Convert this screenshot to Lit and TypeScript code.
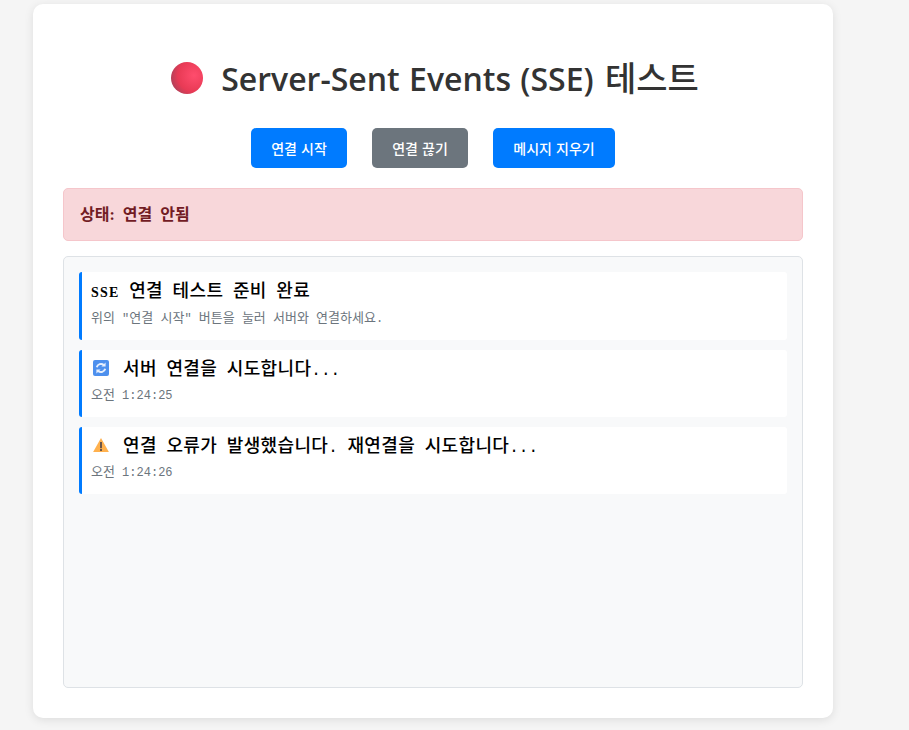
import { LitElement, html, css } from "lit";
import { customElement } from "lit/decorators.js";

const KR = css`"Noto Sans CJK KR"`;

/* Hangul is set a little larger than the Latin mono around it, as in the reference. */
const k = (text: string) =>
  text.split(/([\uAC00-\uD7A3]+)/).map((part, i) => (i % 2 ? html`<span class="k">${part}</span>` : part));

@customElement("app-root")
export class AppRoot extends LitElement {
  static styles = css`
    :host { display: block; height: 730px; overflow: hidden; background: #f5f5f5; font-family: "Open Sans", ${KR}, sans-serif; }
    .card { box-sizing: border-box; width: 800px; height: 714px; margin: 0 0 0 33px; position: relative; top: 4px; background: #fff; border-radius: 10px; box-shadow: 0 2px 10px rgba(0,0,0,.1); padding: 30px; display: flex; flex-direction: column; }
    h1 { margin: 22px 0 0; padding-left: 4px; height: 44px; display: flex; justify-content: center; align-items: center; gap: 18px; font-size: 32px; font-weight: 600; line-height: 44px; color: #333; font-family: "Open Sans", ${KR}, sans-serif; white-space: nowrap; word-spacing: 1px; }
    h1 svg { width: 32px; height: 32px; flex: none; }
    .ttl-k { font-size: 34px; font-weight: 500; margin-left: 2px; }
    .buttons { display: flex; justify-content: center; gap: 25px; margin-top: 28px; }
    button { box-sizing: border-box; height: 40px; border: 0; border-radius: 5px; background: #007bff; color: #fff; font: 500 14px/20px ${KR}, sans-serif; padding: 0; white-space: nowrap; word-spacing: 1px; }
    .b1 { width: 96px; } .b2 { width: 96px; background: #6c757d; } .b3 { width: 122px; }
    .status { box-sizing: border-box; height: 53px; margin-top: 20px; padding: 0 16px; display: flex; align-items: center; background: #f8d7da; border: 1px solid #f5c6cb; border-radius: 5px; color: #721c24; font: 700 16px/20px "Liberation Serif", ${KR}, serif; word-spacing: 4px; white-space: pre; }
    .log { box-sizing: border-box; height: 432px; margin-top: 15px; padding: 15px; background: #f8f9fa; border: 1px solid #dee2e6; border-radius: 5px; display: flex; flex-direction: column; gap: 10px; }
    .item { box-sizing: border-box; height: 67px; padding: 8px 8px 0 9px; background: #fff; border-left: 3px solid #007bff; border-radius: 3px; font-family: "Liberation Mono", ${KR}, monospace; }
    .item.first { height: 68px; }
    .msg { display: flex; align-items: center; height: 20px; margin-top: 2px; font-size: 16px; line-height: 20px; color: #000; white-space: pre; }
    .msg .k { font-size: 18px; font-weight: 500; letter-spacing: .35px; }
    .msg svg { width: 16px; height: 16px; margin: 0 14px 0 2px; flex: none; align-self: flex-start; }
    .sse { font-family: "Liberation Serif", serif; font-size: 14px; font-weight: 700; letter-spacing: 1.2px; }
    .sub { margin-top: 7px; font-size: 12px; line-height: 18px; color: #6c757d; white-space: pre; }
    .sub .k { font-size: 13px; }
    .first .sub { margin-top: 8px; }
  `;

  render() {
    return html`<div class="card">
      <h1>
        <svg viewBox="0 0 32 32"><defs><radialGradient id="ball" cx=".72" cy=".42" r=".78"><stop offset="0" stop-color="#ff4d6d"/><stop offset=".65" stop-color="#e83a55"/><stop offset="1" stop-color="#a8425a"/></radialGradient></defs><circle cx="16" cy="16" r="16" fill="url(#ball)"/></svg>
        <span>Server-Sent Events (SSE) <span class="ttl-k">테스트</span></span>
      </h1>
      <div class="buttons">
        <button class="b1">연결 시작</button>
        <button class="b2">연결 끊기</button>
        <button class="b3">메시지 지우기</button>
      </div>
      <div class="status">상태: 연결 안됨</div>
      <div class="log">
        <div class="item first">
          <div class="msg"><span><span class="sse">SSE</span> ${k("연결 테스트 준비 완료")}</span></div>
          <div class="sub">${k('위의 "연결 시작" 버튼을 눌러 서버와 연결하세요.')}</div>
        </div>
        <div class="item">
          <div class="msg"><svg viewBox="0 0 16 16"><rect width="16" height="16" rx="2" fill="#4d90ee"/><path d="M3.8 7.2A4.3 4.3 0 0 1 10.8 5M12.2 8.8A4.3 4.3 0 0 1 5.2 11" fill="none" stroke="#e6effd" stroke-width="2"/><path d="M12.6 2.4v4.2H8.4zM3.4 13.6V9.4h4.2z" fill="#e6effd"/></svg><span>${k("서버 연결을 시도합니다...")}</span></div>
          <div class="sub">${k("오전 1:24:25")}</div>
        </div>
        <div class="item">
          <div class="msg"><svg viewBox="0 0 16 16"><path d="M8 1 15.9 15H.1z" fill="#ffb14e"/><rect x="7" y="5" width="2" height="6.2" fill="#6b5548"/><rect x="7" y="12" width="2" height="2" fill="#6b5548"/></svg><span>${k("연결 오류가 발생했습니다. 재연결을 시도합니다...")}</span></div>
          <div class="sub">${k("오전 1:24:26")}</div>
        </div>
      </div>
    </div>`;
  }
}
